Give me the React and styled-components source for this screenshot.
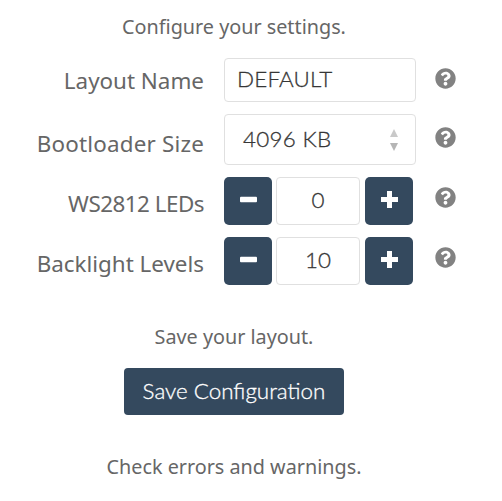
import React from 'react';
import styled, { createGlobalStyle } from 'styled-components';
import { FaQuestionCircle } from 'react-icons/fa';

const Global = createGlobalStyle`
  html, body { margin: 0; padding: 0; background: #fff; }
  body { font-family: "Noto Sans", sans-serif; }
`;
const Page = styled.div`
  width: 468px; height: 501px; overflow: hidden;
  display: flex; flex-direction: column; align-items: center;
  box-sizing: border-box; padding-top: 14px;
`;
const Hint = styled.div`
  font-family: "Noto Sans", sans-serif; font-size: 19.8px; line-height: 26px; color: #666;
  margin-bottom: ${p => p.$mb}px;
`;
const Form = styled.div`
  width: 100%; display: flex; flex-direction: column; gap: 12px; margin-bottom: 39px;
`;
const Row = styled.div`
  display: grid; grid-template-columns: 204px 192px 40px; column-gap: 20px; align-items: center;
`;
const Label = styled.label`
  font-size: 22.4px; line-height: 28px; color: #666; text-align: right;
  margin-top: ${p => p.$mt}px; letter-spacing: ${p => p.$ls || 0}px;
`;
const TextBox = styled.div`
  box-sizing: border-box; height: 44px; border: 1px solid #e0e0e0; border-radius: 4px;
  font-family: Lato, sans-serif; font-weight: 300; -webkit-text-stroke: .3px #363636; font-size: 22.4px; color: #363636; display: flex; align-items: center;
  padding: 0 13px 3px 12px; letter-spacing: .2px;
`;
const SelectBox = styled(TextBox)`
  height: 51px; padding: 0 18px 2px; justify-content: space-between; letter-spacing: .3px;
`;
const Arrows = styled.svg`width: 10px; height: 24px; margin: 2px -2px 0 0;`;
const Stepper = styled.div`display: grid; grid-template-columns: 48px 84px 48px; column-gap: 4px; height: 48px; width: 189px;`;
const StepButton = styled.button`
  border: 0; padding: 0 0 4px; border-radius: 5px; background: #34495e; display: flex; align-items: center; justify-content: center;
  &:last-child { margin-left: 1px; margin-right: -1px; }
`;
const StepValue = styled.div`
  box-sizing: border-box; border: 1px solid #e0e0e0; border-radius: 4px; display: flex; align-items: center; justify-content: center;
  font-family: Lato, sans-serif; font-weight: 300; -webkit-text-stroke: .3px #363636; font-size: 22.4px; color: #363636; padding-bottom: 3px;
`;
const Help = styled.div`
  color: #828282; font-size: 21px; display: flex; justify-content: center; width: 21px; margin-left: -1px; margin-top: ${p => p.$mt}px;
`;
const SaveButton = styled.button`
  box-sizing: border-box; width: 220px; height: 47px; border: 0; border-radius: 4px; background: #34495e; color: #fff;
  font-family: Lato, sans-serif; font-weight: 300; -webkit-text-stroke: .3px #fff; font-size: 22.4px; margin-bottom: 39px; padding: 0 0 3px;
`;
const Minus = () => <svg width="17" height="17" viewBox="0 0 17 17"><rect y="5.75" width="17" height="5.5" rx="1" fill="#fff"/></svg>;
const Plus = () => <svg width="17" height="17" viewBox="0 0 17 17"><path d="M6 0h5v6h6v5h-6v6H6v-6H0V6h6z" fill="#fff"/></svg>;

const Step = ({ label, value, spacing }) => (
  <Row>
    <Label $mt={6} $ls={spacing}>{label}</Label>
    <Stepper>
      <StepButton aria-label="decrease"><Minus /></StepButton>
      <StepValue>{value}</StepValue>
      <StepButton aria-label="increase"><Plus /></StepButton>
    </Stepper>
    <Help $mt={-7}><FaQuestionCircle /></Help>
  </Row>
);

export default function App() {
  return (
    <Page>
      <Global />
      <Hint $mb={18}>Configure your settings.</Hint>
      <Form>
        <Row>
          <Label $mt={2}>Layout Name</Label>
          <TextBox>DEFAULT</TextBox>
          <Help $mt={-4}><FaQuestionCircle /></Help>
        </Row>
        <Row>
          <Label $mt={9} $ls={0.2}>Bootloader Size</Label>
          <SelectBox>
            4096 KB
            <Arrows viewBox="0 0 10 24"><path d="M5 1l4 8H1z" fill="#c9c9c9"/><path d="M1 15h8l-4 8z" fill="#b5b5b5"/></Arrows>
          </SelectBox>
          <Help $mt={-4}><FaQuestionCircle /></Help>
        </Row>
        <Step label="WS2812 LEDs" value="0" spacing={-0.5} />
        <Step label="Backlight Levels" value="10" />
      </Form>
      <Hint $mb={18}>Save your layout.</Hint>
      <SaveButton>Save Configuration</SaveButton>
      <Hint $mb={0}>Check errors and warnings.</Hint>
    </Page>
  );
}
